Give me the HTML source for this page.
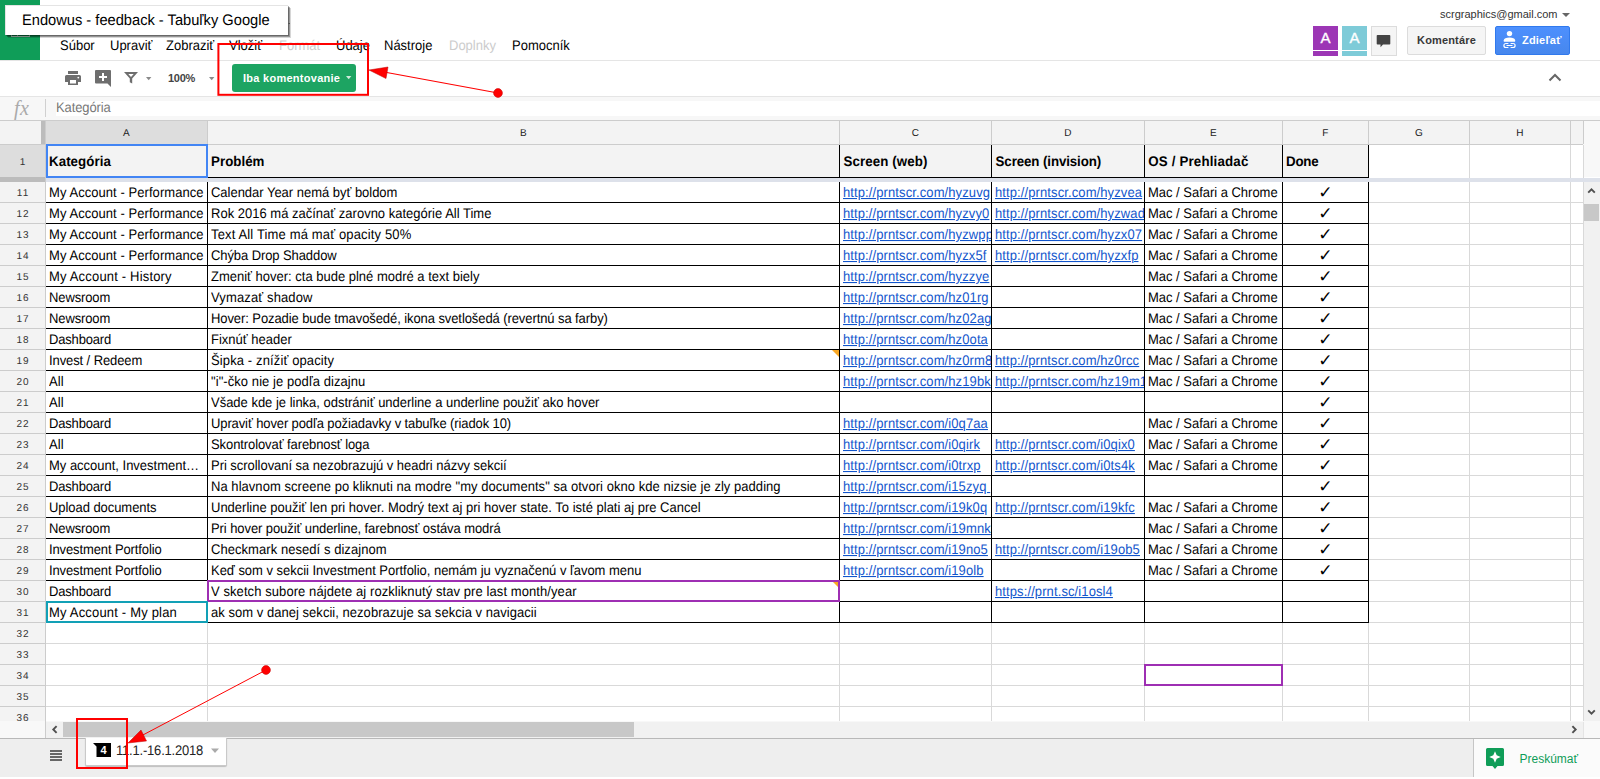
<!DOCTYPE html>
<html><head><meta charset="utf-8"><title>Endowus - feedback - Tabuľky Google</title>
<style>
html,body{margin:0;padding:0}
body{width:1600px;height:779px;overflow:hidden;position:relative;background:#fff;font-family:"Liberation Sans",Arial,sans-serif;font-size:13px;color:#000}
.abs,.abs *{box-sizing:border-box}
div,span,svg{position:absolute}
.t{white-space:nowrap;line-height:1}
.menu{top:38px;font-size:13px;line-height:15px;white-space:nowrap;color:#000;text-rendering:geometricPrecision;transform:scaleY(1.075);transform-origin:0 12px}
.menu.dis{color:#ccc}
.ch{top:121px;height:23px;background:#f3f3f3;font-size:10px;line-height:26px;overflow:hidden;text-align:center;color:#222;letter-spacing:.3px;text-rendering:geometricPrecision}
.rh{left:0;width:45px;background:#f3f3f3;font-size:10px;text-align:center;color:#333;text-rendering:geometricPrecision;letter-spacing:1.100px;text-indent:1.100px}
.rh span{position:static}
  .c{font-size:13px;text-rendering:geometricPrecision;transform:scaleY(1.075);transform-origin:0 16px;line-height:22px;height:20px;letter-spacing:.05px;white-space:pre;overflow:hidden;color:#000}
.c a,.lnk{color:#1155cc;text-decoration:underline;position:static}
.hl{height:1px;background:#000}
.vl{width:1px;background:#000}
.gh{height:1px;background:#d9d9d9}
.gv{width:1px;background:#d9d9d9}
.b{font-weight:700}
</style></head><body>

<div style="left:0;top:0;width:40px;height:60px;background:#0f9d58"></div>
<div style="left:11px;top:22px;width:19px;height:15px;border:1px solid #cfe9dc;box-sizing:border-box"></div>
<div style="left:17px;top:22px;width:1px;height:15px;background:#cfe9dc"></div>
<div class="menu" style="left:60px">Súbor</div>
<div class="menu" style="left:110px">Upraviť</div>
<div class="menu" style="left:166px">Zobraziť</div>
<div class="menu" style="left:229px">Vložiť</div>
<div class="menu dis" style="left:279px">Formát</div>
<div class="menu" style="left:336px">Údaje</div>
<div class="menu" style="left:384px">Nástroje</div>
<div class="menu dis" style="left:449px">Doplnky</div>
<div class="menu" style="left:512px">Pomocník</div>
<div style="left:5px;top:5px;width:283px;height:30px;background:#fff;border:1px solid #e4e4e4;border-right:none;border-bottom:none;box-sizing:border-box;box-shadow:1px 1px 0 rgba(0,0,0,.3),2px 2px 0 rgba(0,0,0,.3),3px 3px 0 rgba(0,0,0,.16)"></div>
<div style="left:288px;top:23px;width:2px;height:1px;background:#555"></div>
<div class="t" style="left:22px;top:13px;font-size:14.67px;line-height:17px;color:#000;text-rendering:geometricPrecision;transform:scaleY(1.04);transform-origin:0 13px">Endowus - feedback - Tabuľky Google</div>
<div class="t" style="left:1440px;top:8px;font-size:11px;line-height:13px;color:#333">scrgraphics@gmail.com</div>
<svg style="left:1561px;top:12px" width="10" height="6"><path d="M1 1h8l-4 4z" fill="#666"/></svg>
<div style="left:1313px;top:26px;width:25px;height:24px;background:#9c36b5"></div><div style="left:1313px;top:51px;width:25px;height:5px;background:#9c36b5"></div>
<div class="t" style="left:1313px;top:29px;width:25px;text-align:center;font-size:15px;line-height:18px;color:#fff;-webkit-text-stroke:.35px #fff">A</div>
<div style="left:1342px;top:26px;width:25px;height:24px;background:#7ecbd8"></div><div style="left:1342px;top:51px;width:25px;height:5px;background:#7ecbd8"></div>
<div class="t" style="left:1342px;top:29px;width:25px;text-align:center;font-size:15px;line-height:18px;color:#fff;-webkit-text-stroke:.35px #fff">A</div>
<div style="left:1371px;top:26px;width:26px;height:30px;background:#f5f5f5;border:1px solid #dcdcdc;box-sizing:border-box"></div>
<svg style="left:1376px;top:34px" width="16" height="15"><path d="M1.5 1h12a.8.8 0 0 1 .8.8v8a.8.8 0 0 1-.8.8H7l-2.5 2.6V10.600H1.500a.8.8 0 0 1-.8-.8v-8A.8.8 0 0 1 1.500 1z" fill="#444"/></svg>
<div style="left:1407px;top:26px;width:79px;height:29px;background:#f5f5f5;border:1px solid #dcdcdc;border-radius:2px;box-sizing:border-box"></div>
<div class="t b" style="left:1407px;top:34px;width:79px;text-align:center;font-size:11px;line-height:13px;color:#383838;letter-spacing:.15px">Komentáre</div>
<div style="left:1495px;top:26px;width:75px;height:29px;background:linear-gradient(#4d90fe,#4787ed);border:1px solid #3079ed;border-radius:2px;box-sizing:border-box"></div>
<svg style="left:1500px;top:28px" width="20" height="22" viewBox="0 0 20 22"><circle cx="9.500" cy="5.600" r="2.700" fill="#fff"/><path d="M3.800 13.750V12.200C3.800 10.300 6.300 9.400 9.450 9.400S15.100 10.300 15.100 12.200V13.750z" fill="#fff"/><path d="M8.400 15.500H5.900a2 2 0 0 0 0 4h2.500M10.600 15.500h2.500a2 2 0 0 1 0 4h-2.500M6.500 17.500h6" fill="none" stroke="#fff" stroke-width="1.200"/></svg>
<div class="t b" style="left:1522px;top:34px;font-size:11px;line-height:13px;color:#fff;letter-spacing:.2px">Zdieľať</div>
<div style="left:0;top:60px;width:1600px;height:1px;background:#e5e5e5"></div>
<div style="left:0;top:96px;width:1600px;height:1px;background:#e5e5e5"></div>
<svg style="left:64px;top:69px" width="18" height="18" viewBox="0 0 18 18"><path d="M4 2h10v3H4zM2.500 6h13A1.500 1.500 0 0 1 17 7.500V13h-3v3H4v-3H1V7.500A1.500 1.500 0 0 1 2.500 6zM6 11v3.500h6V11z" fill="#6e6e6e"/><circle cx="14.300" cy="8.600" r=".9" fill="#fff"/></svg>
<svg style="left:94px;top:69px" width="18" height="19" viewBox="0 0 18 19"><path d="M2 1h14a1 1 0 0 1 1 1v16l-3.500-3.500H2a1 1 0 0 1-1-1V2a1 1 0 0 1 1-1z" fill="#6e6e6e"/><path d="M8 4h2v3h3v2h-3v3H8V9H5V7h3z" fill="#fff"/></svg>
<svg style="left:123px;top:71px" width="16" height="14" viewBox="0 0 16 14"><path d="M1 1h14L9.200 7.600v4.900L6.800 11.200V7.600z" fill="#6e6e6e"/><path d="M5.300 2.900h5.400L8 5.900z" fill="#fff"/></svg>
<svg style="left:146px;top:77px" width="6" height="4"><path d="M0 0h5.400L2.700 3.200z" fill="#8a8a8a"/></svg>
<div class="t b" style="left:168px;top:72px;font-size:11px;line-height:13px;color:#444;letter-spacing:-.25px">100%</div>
<svg style="left:208.500px;top:77px" width="6" height="4"><path d="M0 0h5.400L2.700 3.200z" fill="#8a8a8a"/></svg>
<div style="left:232px;top:64px;width:124px;height:28px;background:#1da462;border-radius:3px"></div>
<div class="t b" style="left:243px;top:72px;font-size:11px;line-height:13px;color:#fff;letter-spacing:.27px">Iba komentovanie</div>
<svg style="left:346px;top:76px" width="6" height="4"><path d="M0 0h5.400L2.700 3.200z" fill="#cfeadb"/></svg>
<svg style="left:1548px;top:72px" width="14" height="10"><path d="M1.500 8.500L7 3l5.500 5.500" fill="none" stroke="#666" stroke-width="2"/></svg>
<div style="left:0;top:97px;width:1600px;height:23px;background:#f7f7f7"></div>
<div style="left:56px;top:101px;width:1544px;height:15px;background:#fff"></div>
<div style="left:45px;top:99px;width:1px;height:18px;background:#d0d0d0"></div>
<div class="t" style="left:14px;top:98px;font-family:'Liberation Serif',serif;font-style:italic;font-size:20px;line-height:20px;color:#aaa;letter-spacing:.5px">fx</div>
<div class="t" style="left:56px;top:100px;font-size:13px;line-height:15px;color:#777;letter-spacing:-.1px;text-rendering:geometricPrecision;transform:scaleY(1.075);transform-origin:0 12px">Kategória</div>
<div style="left:0;top:120px;width:1600px;height:1px;background:#ccc"></div>
<div style="left:0;top:121px;width:1583px;height:23px;background:#f3f3f3"></div>
<div style="left:1583px;top:121px;width:17px;height:56px;background:#f8f8f8"></div>
<div class="ch" style="left:46px;width:161px;background:#ddd">A</div>
<div style="left:207px;top:121px;width:1px;height:23px;background:#ccc"></div>
<div class="ch" style="left:208px;width:631px;background:#f3f3f3">B</div>
<div style="left:839px;top:121px;width:1px;height:23px;background:#ccc"></div>
<div class="ch" style="left:840px;width:151px;background:#f3f3f3">C</div>
<div style="left:991px;top:121px;width:1px;height:23px;background:#ccc"></div>
<div class="ch" style="left:992px;width:152px;background:#f3f3f3">D</div>
<div style="left:1144px;top:121px;width:1px;height:23px;background:#ccc"></div>
<div class="ch" style="left:1145px;width:137px;background:#f3f3f3">E</div>
<div style="left:1282px;top:121px;width:1px;height:23px;background:#ccc"></div>
<div class="ch" style="left:1283px;width:85px;background:#f3f3f3">F</div>
<div style="left:1368px;top:121px;width:1px;height:23px;background:#ccc"></div>
<div class="ch" style="left:1369px;width:100px;background:#f3f3f3">G</div>
<div style="left:1469px;top:121px;width:1px;height:23px;background:#ccc"></div>
<div class="ch" style="left:1470px;width:100px;background:#f3f3f3">H</div>
<div style="left:1570px;top:121px;width:1px;height:23px;background:#ccc"></div>
<div class="ch" style="left:1571px;width:12px;background:#f3f3f3"></div>
<div style="left:1583px;top:121px;width:1px;height:23px;background:#ccc"></div>
<div style="left:41px;top:121px;width:5px;height:23px;background:#bcbcbc"></div>
<div style="left:0;top:144px;width:1583px;height:1px;background:#ccc"></div>
<div class="rh" style="top:145px;height:32px;line-height:36px;background:#ddd"><span>1</span></div>
<div style="left:0;top:177px;width:45px;height:5px;background:#bcbcbc"></div>
<div class="rh" style="top:182px;height:20px;line-height:24px;overflow:hidden"><span>11</span></div>
<div style="left:0;top:202px;width:45px;height:1px;background:#ccc"></div>
<div class="rh" style="top:203px;height:20px;line-height:24px;overflow:hidden"><span>12</span></div>
<div style="left:0;top:223px;width:45px;height:1px;background:#ccc"></div>
<div class="rh" style="top:224px;height:20px;line-height:24px;overflow:hidden"><span>13</span></div>
<div style="left:0;top:244px;width:45px;height:1px;background:#ccc"></div>
<div class="rh" style="top:245px;height:20px;line-height:24px;overflow:hidden"><span>14</span></div>
<div style="left:0;top:265px;width:45px;height:1px;background:#ccc"></div>
<div class="rh" style="top:266px;height:20px;line-height:24px;overflow:hidden"><span>15</span></div>
<div style="left:0;top:286px;width:45px;height:1px;background:#ccc"></div>
<div class="rh" style="top:287px;height:20px;line-height:24px;overflow:hidden"><span>16</span></div>
<div style="left:0;top:307px;width:45px;height:1px;background:#ccc"></div>
<div class="rh" style="top:308px;height:20px;line-height:24px;overflow:hidden"><span>17</span></div>
<div style="left:0;top:328px;width:45px;height:1px;background:#ccc"></div>
<div class="rh" style="top:329px;height:20px;line-height:24px;overflow:hidden"><span>18</span></div>
<div style="left:0;top:349px;width:45px;height:1px;background:#ccc"></div>
<div class="rh" style="top:350px;height:20px;line-height:24px;overflow:hidden"><span>19</span></div>
<div style="left:0;top:370px;width:45px;height:1px;background:#ccc"></div>
<div class="rh" style="top:371px;height:20px;line-height:24px;overflow:hidden"><span>20</span></div>
<div style="left:0;top:391px;width:45px;height:1px;background:#ccc"></div>
<div class="rh" style="top:392px;height:20px;line-height:24px;overflow:hidden"><span>21</span></div>
<div style="left:0;top:412px;width:45px;height:1px;background:#ccc"></div>
<div class="rh" style="top:413px;height:20px;line-height:24px;overflow:hidden"><span>22</span></div>
<div style="left:0;top:433px;width:45px;height:1px;background:#ccc"></div>
<div class="rh" style="top:434px;height:20px;line-height:24px;overflow:hidden"><span>23</span></div>
<div style="left:0;top:454px;width:45px;height:1px;background:#ccc"></div>
<div class="rh" style="top:455px;height:20px;line-height:24px;overflow:hidden"><span>24</span></div>
<div style="left:0;top:475px;width:45px;height:1px;background:#ccc"></div>
<div class="rh" style="top:476px;height:20px;line-height:24px;overflow:hidden"><span>25</span></div>
<div style="left:0;top:496px;width:45px;height:1px;background:#ccc"></div>
<div class="rh" style="top:497px;height:20px;line-height:24px;overflow:hidden"><span>26</span></div>
<div style="left:0;top:517px;width:45px;height:1px;background:#ccc"></div>
<div class="rh" style="top:518px;height:20px;line-height:24px;overflow:hidden"><span>27</span></div>
<div style="left:0;top:538px;width:45px;height:1px;background:#ccc"></div>
<div class="rh" style="top:539px;height:20px;line-height:24px;overflow:hidden"><span>28</span></div>
<div style="left:0;top:559px;width:45px;height:1px;background:#ccc"></div>
<div class="rh" style="top:560px;height:20px;line-height:24px;overflow:hidden"><span>29</span></div>
<div style="left:0;top:580px;width:45px;height:1px;background:#ccc"></div>
<div class="rh" style="top:581px;height:20px;line-height:24px;overflow:hidden"><span>30</span></div>
<div style="left:0;top:601px;width:45px;height:1px;background:#ccc"></div>
<div class="rh" style="top:602px;height:20px;line-height:24px;overflow:hidden"><span>31</span></div>
<div style="left:0;top:622px;width:45px;height:1px;background:#ccc"></div>
<div class="rh" style="top:623px;height:20px;line-height:24px;overflow:hidden"><span>32</span></div>
<div style="left:0;top:643px;width:45px;height:1px;background:#ccc"></div>
<div class="rh" style="top:644px;height:20px;line-height:24px;overflow:hidden"><span>33</span></div>
<div style="left:0;top:664px;width:45px;height:1px;background:#ccc"></div>
<div class="rh" style="top:665px;height:20px;line-height:24px;overflow:hidden"><span>34</span></div>
<div style="left:0;top:685px;width:45px;height:1px;background:#ccc"></div>
<div class="rh" style="top:686px;height:20px;line-height:24px;overflow:hidden"><span>35</span></div>
<div style="left:0;top:706px;width:45px;height:1px;background:#ccc"></div>
<div class="rh" style="top:707px;height:20px;line-height:24px;overflow:hidden"><span>36</span></div>
<div style="left:0;top:727px;width:45px;height:1px;background:#ccc"></div>
<div style="left:45px;top:121px;width:1px;height:600px;background:#ccc"></div>
<div class="gh" style="left:46px;top:202px;width:1537px"></div>
<div class="gh" style="left:46px;top:223px;width:1537px"></div>
<div class="gh" style="left:46px;top:244px;width:1537px"></div>
<div class="gh" style="left:46px;top:265px;width:1537px"></div>
<div class="gh" style="left:46px;top:286px;width:1537px"></div>
<div class="gh" style="left:46px;top:307px;width:1537px"></div>
<div class="gh" style="left:46px;top:328px;width:1537px"></div>
<div class="gh" style="left:46px;top:349px;width:1537px"></div>
<div class="gh" style="left:46px;top:370px;width:1537px"></div>
<div class="gh" style="left:46px;top:391px;width:1537px"></div>
<div class="gh" style="left:46px;top:412px;width:1537px"></div>
<div class="gh" style="left:46px;top:433px;width:1537px"></div>
<div class="gh" style="left:46px;top:454px;width:1537px"></div>
<div class="gh" style="left:46px;top:475px;width:1537px"></div>
<div class="gh" style="left:46px;top:496px;width:1537px"></div>
<div class="gh" style="left:46px;top:517px;width:1537px"></div>
<div class="gh" style="left:46px;top:538px;width:1537px"></div>
<div class="gh" style="left:46px;top:559px;width:1537px"></div>
<div class="gh" style="left:46px;top:580px;width:1537px"></div>
<div class="gh" style="left:46px;top:601px;width:1537px"></div>
<div class="gh" style="left:46px;top:622px;width:1537px"></div>
<div class="gh" style="left:46px;top:643px;width:1537px"></div>
<div class="gh" style="left:46px;top:664px;width:1537px"></div>
<div class="gh" style="left:46px;top:685px;width:1537px"></div>
<div class="gh" style="left:46px;top:706px;width:1537px"></div>
<div class="gh" style="left:46px;top:727px;width:1537px"></div>
<div class="gv" style="left:207px;top:145px;height:576px"></div>
<div class="gv" style="left:839px;top:145px;height:576px"></div>
<div class="gv" style="left:991px;top:145px;height:576px"></div>
<div class="gv" style="left:1144px;top:145px;height:576px"></div>
<div class="gv" style="left:1282px;top:145px;height:576px"></div>
<div class="gv" style="left:1368px;top:145px;height:576px"></div>
<div class="gv" style="left:1469px;top:145px;height:576px"></div>
<div class="gv" style="left:1570px;top:145px;height:576px"></div>
<div class="gv" style="left:1583px;top:145px;height:576px"></div>
<div style="left:46px;top:145px;width:1322px;height:32px;background:#f3f3f3"></div>
<div style="left:46px;top:178px;width:1554px;height:4px;background:#dde1ea"></div>
<div class="t b" style="left:49px;top:154px;font-size:13.333px;text-rendering:geometricPrecision;transform:scaleY(1.05);transform-origin:0 13px;line-height:16px;letter-spacing:0.046px">Kategória</div>
<div class="t b" style="left:211px;top:154px;font-size:13.333px;text-rendering:geometricPrecision;transform:scaleY(1.05);transform-origin:0 13px;line-height:16px;letter-spacing:0.025px">Problém</div>
<div class="t b" style="left:843.6px;top:154px;font-size:13.333px;text-rendering:geometricPrecision;transform:scaleY(1.05);transform-origin:0 13px;line-height:16px;letter-spacing:0.078px">Screen (web)</div>
<div class="t b" style="left:995.6px;top:154px;font-size:13.333px;text-rendering:geometricPrecision;transform:scaleY(1.05);transform-origin:0 13px;line-height:16px;letter-spacing:-0.112px">Screen (invision)</div>
<div class="t b" style="left:1148.2px;top:154px;font-size:13.333px;text-rendering:geometricPrecision;transform:scaleY(1.05);transform-origin:0 13px;line-height:16px;letter-spacing:0.168px">OS / Prehliadač</div>
<div class="t b" style="left:1286px;top:154px;font-size:13.333px;text-rendering:geometricPrecision;transform:scaleY(1.05);transform-origin:0 13px;line-height:16px;letter-spacing:-0.207px">Done</div>
<div class="c " style="left:46px;top:182px;width:161px;padding-left:3px;box-sizing:border-box;letter-spacing:0.060px;">My Account - Performance</div>
<div class="c " style="left:208px;top:182px;width:631px;padding-left:3px;box-sizing:border-box;letter-spacing:-0.021px;">Calendar Year nemá byť boldom</div>
<div class="c " style="left:840px;top:182px;width:151px;padding-left:3px;box-sizing:border-box;letter-spacing:0.104px;"><span class="lnk">http://prntscr.com/hyzuvg</span></div>
<div class="c " style="left:992px;top:182px;width:152px;padding-left:3px;box-sizing:border-box;letter-spacing:0.104px;"><span class="lnk">http://prntscr.com/hyzvea</span></div>
<div class="c " style="left:1145px;top:182px;width:137px;padding-left:3px;box-sizing:border-box;letter-spacing:-0.021px;">Mac / Safari a Chrome</div>
<div class="c" style="left:1283px;top:182px;width:85px;text-align:center;font-family:'DejaVu Sans',sans-serif;font-weight:700;font-size:17px;line-height:23px;transform:none">✓</div>
<div class="c " style="left:46px;top:203px;width:161px;padding-left:3px;box-sizing:border-box;letter-spacing:0.060px;">My Account - Performance</div>
<div class="c " style="left:208px;top:203px;width:631px;padding-left:3px;box-sizing:border-box;letter-spacing:0.005px;">Rok 2016 má začínať zarovno kategórie All Time</div>
<div class="c " style="left:840px;top:203px;width:151px;padding-left:3px;box-sizing:border-box;letter-spacing:0.104px;"><span class="lnk">http://prntscr.com/hyzvy0</span></div>
<div class="c " style="left:992px;top:203px;width:152px;padding-left:3px;box-sizing:border-box;letter-spacing:0.104px;"><span class="lnk">http://prntscr.com/hyzwad</span></div>
<div class="c " style="left:1145px;top:203px;width:137px;padding-left:3px;box-sizing:border-box;letter-spacing:-0.021px;">Mac / Safari a Chrome</div>
<div class="c" style="left:1283px;top:203px;width:85px;text-align:center;font-family:'DejaVu Sans',sans-serif;font-weight:700;font-size:17px;line-height:23px;transform:none">✓</div>
<div class="c " style="left:46px;top:224px;width:161px;padding-left:3px;box-sizing:border-box;letter-spacing:0.060px;">My Account - Performance</div>
<div class="c " style="left:208px;top:224px;width:631px;padding-left:3px;box-sizing:border-box;letter-spacing:0.149px;">Text All Time má mať opacity 50%</div>
<div class="c " style="left:840px;top:224px;width:151px;padding-left:3px;box-sizing:border-box;letter-spacing:0.104px;"><span class="lnk">http://prntscr.com/hyzwpp</span></div>
<div class="c " style="left:992px;top:224px;width:152px;padding-left:3px;box-sizing:border-box;letter-spacing:0.104px;"><span class="lnk">http://prntscr.com/hyzx07</span></div>
<div class="c " style="left:1145px;top:224px;width:137px;padding-left:3px;box-sizing:border-box;letter-spacing:-0.021px;">Mac / Safari a Chrome</div>
<div class="c" style="left:1283px;top:224px;width:85px;text-align:center;font-family:'DejaVu Sans',sans-serif;font-weight:700;font-size:17px;line-height:23px;transform:none">✓</div>
<div class="c " style="left:46px;top:245px;width:161px;padding-left:3px;box-sizing:border-box;letter-spacing:0.060px;">My Account - Performance</div>
<div class="c " style="left:208px;top:245px;width:631px;padding-left:3px;box-sizing:border-box;letter-spacing:-0.089px;">Chýba Drop Shaddow</div>
<div class="c " style="left:840px;top:245px;width:151px;padding-left:3px;box-sizing:border-box;letter-spacing:0.104px;"><span class="lnk">http://prntscr.com/hyzx5f</span></div>
<div class="c " style="left:992px;top:245px;width:152px;padding-left:3px;box-sizing:border-box;letter-spacing:0.104px;"><span class="lnk">http://prntscr.com/hyzxfp</span></div>
<div class="c " style="left:1145px;top:245px;width:137px;padding-left:3px;box-sizing:border-box;letter-spacing:-0.021px;">Mac / Safari a Chrome</div>
<div class="c" style="left:1283px;top:245px;width:85px;text-align:center;font-family:'DejaVu Sans',sans-serif;font-weight:700;font-size:17px;line-height:23px;transform:none">✓</div>
<div class="c " style="left:46px;top:266px;width:161px;padding-left:3px;box-sizing:border-box;letter-spacing:0.180px;">My Account - History</div>
<div class="c " style="left:208px;top:266px;width:631px;padding-left:3px;box-sizing:border-box;letter-spacing:-0.005px;">Zmeniť hover: cta bude plné modré a text biely</div>
<div class="c " style="left:840px;top:266px;width:151px;padding-left:3px;box-sizing:border-box;letter-spacing:0.104px;"><span class="lnk">http://prntscr.com/hyzzye</span></div>
<div class="c " style="left:1145px;top:266px;width:137px;padding-left:3px;box-sizing:border-box;letter-spacing:-0.021px;">Mac / Safari a Chrome</div>
<div class="c" style="left:1283px;top:266px;width:85px;text-align:center;font-family:'DejaVu Sans',sans-serif;font-weight:700;font-size:17px;line-height:23px;transform:none">✓</div>
<div class="c " style="left:46px;top:287px;width:161px;padding-left:3px;box-sizing:border-box;letter-spacing:-0.116px;">Newsroom</div>
<div class="c " style="left:208px;top:287px;width:631px;padding-left:3px;box-sizing:border-box;letter-spacing:0.130px;">Vymazať shadow</div>
<div class="c " style="left:840px;top:287px;width:151px;padding-left:3px;box-sizing:border-box;letter-spacing:0.104px;"><span class="lnk">http://prntscr.com/hz01rg</span></div>
<div class="c " style="left:1145px;top:287px;width:137px;padding-left:3px;box-sizing:border-box;letter-spacing:-0.021px;">Mac / Safari a Chrome</div>
<div class="c" style="left:1283px;top:287px;width:85px;text-align:center;font-family:'DejaVu Sans',sans-serif;font-weight:700;font-size:17px;line-height:23px;transform:none">✓</div>
<div class="c " style="left:46px;top:308px;width:161px;padding-left:3px;box-sizing:border-box;letter-spacing:-0.116px;">Newsroom</div>
<div class="c " style="left:208px;top:308px;width:631px;padding-left:3px;box-sizing:border-box;letter-spacing:-0.085px;">Hover: Pozadie bude tmavošedé, ikona svetlošedá (revertnú sa farby)</div>
<div class="c " style="left:840px;top:308px;width:151px;padding-left:3px;box-sizing:border-box;letter-spacing:0.104px;"><span class="lnk">http://prntscr.com/hz02ag</span></div>
<div class="c " style="left:1145px;top:308px;width:137px;padding-left:3px;box-sizing:border-box;letter-spacing:-0.021px;">Mac / Safari a Chrome</div>
<div class="c" style="left:1283px;top:308px;width:85px;text-align:center;font-family:'DejaVu Sans',sans-serif;font-weight:700;font-size:17px;line-height:23px;transform:none">✓</div>
<div class="c " style="left:46px;top:329px;width:161px;padding-left:3px;box-sizing:border-box;letter-spacing:-0.179px;">Dashboard</div>
<div class="c " style="left:208px;top:329px;width:631px;padding-left:3px;box-sizing:border-box;letter-spacing:0.003px;">Fixnúť header</div>
<div class="c " style="left:840px;top:329px;width:151px;padding-left:3px;box-sizing:border-box;letter-spacing:0.104px;"><span class="lnk">http://prntscr.com/hz0ota</span></div>
<div class="c " style="left:1145px;top:329px;width:137px;padding-left:3px;box-sizing:border-box;letter-spacing:-0.021px;">Mac / Safari a Chrome</div>
<div class="c" style="left:1283px;top:329px;width:85px;text-align:center;font-family:'DejaVu Sans',sans-serif;font-weight:700;font-size:17px;line-height:23px;transform:none">✓</div>
<div class="c " style="left:46px;top:350px;width:161px;padding-left:3px;box-sizing:border-box;letter-spacing:-0.097px;">Invest / Redeem</div>
<div class="c " style="left:208px;top:350px;width:631px;padding-left:3px;box-sizing:border-box;letter-spacing:0.123px;">Šipka - znížiť opacity</div>
<div class="c " style="left:840px;top:350px;width:151px;padding-left:3px;box-sizing:border-box;letter-spacing:0.104px;"><span class="lnk">http://prntscr.com/hz0rm8</span></div>
<div class="c " style="left:992px;top:350px;width:152px;padding-left:3px;box-sizing:border-box;letter-spacing:0.104px;"><span class="lnk">http://prntscr.com/hz0rcc</span></div>
<div class="c " style="left:1145px;top:350px;width:137px;padding-left:3px;box-sizing:border-box;letter-spacing:-0.021px;">Mac / Safari a Chrome</div>
<div class="c" style="left:1283px;top:350px;width:85px;text-align:center;font-family:'DejaVu Sans',sans-serif;font-weight:700;font-size:17px;line-height:23px;transform:none">✓</div>
<div class="c " style="left:46px;top:371px;width:161px;padding-left:3px;box-sizing:border-box;letter-spacing:0.116px;">All</div>
<div class="c " style="left:208px;top:371px;width:631px;padding-left:3px;box-sizing:border-box;letter-spacing:0.068px;">"i"-čko nie je podľa dizajnu</div>
<div class="c " style="left:840px;top:371px;width:151px;padding-left:3px;box-sizing:border-box;letter-spacing:0.104px;"><span class="lnk">http://prntscr.com/hz19bk</span></div>
<div class="c " style="left:992px;top:371px;width:152px;padding-left:3px;box-sizing:border-box;letter-spacing:0.104px;"><span class="lnk">http://prntscr.com/hz19m1</span></div>
<div class="c " style="left:1145px;top:371px;width:137px;padding-left:3px;box-sizing:border-box;letter-spacing:-0.021px;">Mac / Safari a Chrome</div>
<div class="c" style="left:1283px;top:371px;width:85px;text-align:center;font-family:'DejaVu Sans',sans-serif;font-weight:700;font-size:17px;line-height:23px;transform:none">✓</div>
<div class="c " style="left:46px;top:392px;width:161px;padding-left:3px;box-sizing:border-box;letter-spacing:0.116px;">All</div>
<div class="c " style="left:208px;top:392px;width:631px;padding-left:3px;box-sizing:border-box;letter-spacing:-0.011px;">Všade kde je linka, odstrániť underline a underline použiť ako hover</div>
<div class="c" style="left:1283px;top:392px;width:85px;text-align:center;font-family:'DejaVu Sans',sans-serif;font-weight:700;font-size:17px;line-height:23px;transform:none">✓</div>
<div class="c " style="left:46px;top:413px;width:161px;padding-left:3px;box-sizing:border-box;letter-spacing:-0.179px;">Dashboard</div>
<div class="c " style="left:208px;top:413px;width:631px;padding-left:3px;box-sizing:border-box;letter-spacing:-0.112px;">Upraviť hover podľa požiadavky v tabuľke (riadok 10)</div>
<div class="c " style="left:840px;top:413px;width:151px;padding-left:3px;box-sizing:border-box;letter-spacing:0.104px;"><span class="lnk">http://prntscr.com/i0q7aa</span></div>
<div class="c " style="left:1145px;top:413px;width:137px;padding-left:3px;box-sizing:border-box;letter-spacing:-0.021px;">Mac / Safari a Chrome</div>
<div class="c" style="left:1283px;top:413px;width:85px;text-align:center;font-family:'DejaVu Sans',sans-serif;font-weight:700;font-size:17px;line-height:23px;transform:none">✓</div>
<div class="c " style="left:46px;top:434px;width:161px;padding-left:3px;box-sizing:border-box;letter-spacing:0.116px;">All</div>
<div class="c " style="left:208px;top:434px;width:631px;padding-left:3px;box-sizing:border-box;letter-spacing:-0.089px;">Skontrolovať farebnosť loga</div>
<div class="c " style="left:840px;top:434px;width:151px;padding-left:3px;box-sizing:border-box;letter-spacing:0.104px;"><span class="lnk">http://prntscr.com/i0qirk</span></div>
<div class="c " style="left:992px;top:434px;width:152px;padding-left:3px;box-sizing:border-box;letter-spacing:0.104px;"><span class="lnk">http://prntscr.com/i0qix0</span></div>
<div class="c " style="left:1145px;top:434px;width:137px;padding-left:3px;box-sizing:border-box;letter-spacing:-0.021px;">Mac / Safari a Chrome</div>
<div class="c" style="left:1283px;top:434px;width:85px;text-align:center;font-family:'DejaVu Sans',sans-serif;font-weight:700;font-size:17px;line-height:23px;transform:none">✓</div>
<div class="c " style="left:46px;top:455px;width:161px;padding-left:3px;box-sizing:border-box;letter-spacing:-0.012px;">My account, Investment…</div>
<div class="c " style="left:208px;top:455px;width:631px;padding-left:3px;box-sizing:border-box;letter-spacing:-0.040px;">Pri scrollovaní sa nezobrazujú v headri názvy sekcií</div>
<div class="c " style="left:840px;top:455px;width:151px;padding-left:3px;box-sizing:border-box;letter-spacing:0.104px;"><span class="lnk">http://prntscr.com/i0trxp</span></div>
<div class="c " style="left:992px;top:455px;width:152px;padding-left:3px;box-sizing:border-box;letter-spacing:0.104px;"><span class="lnk">http://prntscr.com/i0ts4k</span></div>
<div class="c " style="left:1145px;top:455px;width:137px;padding-left:3px;box-sizing:border-box;letter-spacing:-0.021px;">Mac / Safari a Chrome</div>
<div class="c" style="left:1283px;top:455px;width:85px;text-align:center;font-family:'DejaVu Sans',sans-serif;font-weight:700;font-size:17px;line-height:23px;transform:none">✓</div>
<div class="c " style="left:46px;top:476px;width:161px;padding-left:3px;box-sizing:border-box;letter-spacing:-0.179px;">Dashboard</div>
<div class="c " style="left:208px;top:476px;width:631px;padding-left:3px;box-sizing:border-box;letter-spacing:0.042px;">Na hlavnom screene po kliknuti na modre "my documents" sa otvori okno kde nizsie je zly padding</div>
<div class="c " style="left:840px;top:476px;width:151px;padding-left:3px;box-sizing:border-box;letter-spacing:0.104px;"><span class="lnk">http://prntscr.com/i15zyq </span></div>
<div class="c" style="left:1283px;top:476px;width:85px;text-align:center;font-family:'DejaVu Sans',sans-serif;font-weight:700;font-size:17px;line-height:23px;transform:none">✓</div>
<div class="c " style="left:46px;top:497px;width:161px;padding-left:3px;box-sizing:border-box;letter-spacing:-0.057px;">Upload documents</div>
<div class="c " style="left:208px;top:497px;width:631px;padding-left:3px;box-sizing:border-box;letter-spacing:0.001px;">Underline použiť len pri hover. Modrý text aj pri hover state. To isté plati aj pre Cancel</div>
<div class="c " style="left:840px;top:497px;width:151px;padding-left:3px;box-sizing:border-box;letter-spacing:0.104px;"><span class="lnk">http://prntscr.com/i19k0q</span></div>
<div class="c " style="left:992px;top:497px;width:152px;padding-left:3px;box-sizing:border-box;letter-spacing:0.104px;"><span class="lnk">http://prntscr.com/i19kfc</span></div>
<div class="c " style="left:1145px;top:497px;width:137px;padding-left:3px;box-sizing:border-box;letter-spacing:-0.021px;">Mac / Safari a Chrome</div>
<div class="c" style="left:1283px;top:497px;width:85px;text-align:center;font-family:'DejaVu Sans',sans-serif;font-weight:700;font-size:17px;line-height:23px;transform:none">✓</div>
<div class="c " style="left:46px;top:518px;width:161px;padding-left:3px;box-sizing:border-box;letter-spacing:-0.116px;">Newsroom</div>
<div class="c " style="left:208px;top:518px;width:631px;padding-left:3px;box-sizing:border-box;letter-spacing:-0.083px;">Pri hover použiť underline, farebnosť ostáva modrá</div>
<div class="c " style="left:840px;top:518px;width:151px;padding-left:3px;box-sizing:border-box;letter-spacing:0.104px;"><span class="lnk">http://prntscr.com/i19mnk</span></div>
<div class="c " style="left:1145px;top:518px;width:137px;padding-left:3px;box-sizing:border-box;letter-spacing:-0.021px;">Mac / Safari a Chrome</div>
<div class="c" style="left:1283px;top:518px;width:85px;text-align:center;font-family:'DejaVu Sans',sans-serif;font-weight:700;font-size:17px;line-height:23px;transform:none">✓</div>
<div class="c " style="left:46px;top:539px;width:161px;padding-left:3px;box-sizing:border-box;letter-spacing:-0.115px;">Investment Portfolio</div>
<div class="c " style="left:208px;top:539px;width:631px;padding-left:3px;box-sizing:border-box;letter-spacing:0.054px;">Checkmark nesedí s dizajnom</div>
<div class="c " style="left:840px;top:539px;width:151px;padding-left:3px;box-sizing:border-box;letter-spacing:0.104px;"><span class="lnk">http://prntscr.com/i19no5</span></div>
<div class="c " style="left:992px;top:539px;width:152px;padding-left:3px;box-sizing:border-box;letter-spacing:0.104px;"><span class="lnk">http://prntscr.com/i19ob5</span></div>
<div class="c " style="left:1145px;top:539px;width:137px;padding-left:3px;box-sizing:border-box;letter-spacing:-0.021px;">Mac / Safari a Chrome</div>
<div class="c" style="left:1283px;top:539px;width:85px;text-align:center;font-family:'DejaVu Sans',sans-serif;font-weight:700;font-size:17px;line-height:23px;transform:none">✓</div>
<div class="c " style="left:46px;top:560px;width:161px;padding-left:3px;box-sizing:border-box;letter-spacing:-0.115px;">Investment Portfolio</div>
<div class="c " style="left:208px;top:560px;width:631px;padding-left:3px;box-sizing:border-box;letter-spacing:-0.027px;">Keď som v sekcii Investment Portfolio, nemám ju vyznačenú v ľavom menu</div>
<div class="c " style="left:840px;top:560px;width:151px;padding-left:3px;box-sizing:border-box;letter-spacing:0.104px;"><span class="lnk">http://prntscr.com/i19olb</span></div>
<div class="c " style="left:1145px;top:560px;width:137px;padding-left:3px;box-sizing:border-box;letter-spacing:-0.021px;">Mac / Safari a Chrome</div>
<div class="c" style="left:1283px;top:560px;width:85px;text-align:center;font-family:'DejaVu Sans',sans-serif;font-weight:700;font-size:17px;line-height:23px;transform:none">✓</div>
<div class="c " style="left:46px;top:581px;width:161px;padding-left:3px;box-sizing:border-box;letter-spacing:-0.179px;">Dashboard</div>
<div class="c " style="left:208px;top:581px;width:631px;padding-left:3px;box-sizing:border-box;letter-spacing:0.080px;">V sketch subore nájdete aj rozkliknutý stav pre last month/year</div>
<div class="c " style="left:992px;top:581px;width:152px;padding-left:3px;box-sizing:border-box;letter-spacing:0.104px;"><span class="lnk">https://prnt.sc/i1osl4</span></div>
<div class="c " style="left:46px;top:602px;width:161px;padding-left:3px;box-sizing:border-box;letter-spacing:0.186px;">My Account - My plan</div>
<div class="c " style="left:208px;top:602px;width:631px;padding-left:3px;box-sizing:border-box;letter-spacing:0.034px;">ak som v danej sekcii, nezobrazuje sa sekcia v navigacii</div>
<div class="hl" style="left:207px;top:177px;width:1162px"></div>
<div class="hl" style="left:46px;top:202px;width:1323px"></div>
<div class="hl" style="left:46px;top:223px;width:1323px"></div>
<div class="hl" style="left:46px;top:244px;width:1323px"></div>
<div class="hl" style="left:46px;top:265px;width:1323px"></div>
<div class="hl" style="left:46px;top:286px;width:1323px"></div>
<div class="hl" style="left:46px;top:307px;width:1323px"></div>
<div class="hl" style="left:46px;top:328px;width:1323px"></div>
<div class="hl" style="left:46px;top:349px;width:1323px"></div>
<div class="hl" style="left:46px;top:370px;width:1323px"></div>
<div class="hl" style="left:46px;top:391px;width:1323px"></div>
<div class="hl" style="left:46px;top:412px;width:1323px"></div>
<div class="hl" style="left:46px;top:433px;width:1323px"></div>
<div class="hl" style="left:46px;top:454px;width:1323px"></div>
<div class="hl" style="left:46px;top:475px;width:1323px"></div>
<div class="hl" style="left:46px;top:496px;width:1323px"></div>
<div class="hl" style="left:46px;top:517px;width:1323px"></div>
<div class="hl" style="left:46px;top:538px;width:1323px"></div>
<div class="hl" style="left:46px;top:559px;width:1323px"></div>
<div class="hl" style="left:46px;top:580px;width:1323px"></div>
<div class="hl" style="left:46px;top:601px;width:1323px"></div>
<div class="hl" style="left:46px;top:622px;width:1323px"></div>
<div class="vl" style="left:207px;top:145px;height:33px"></div>
<div class="vl" style="left:207px;top:182px;height:441px"></div>
<div class="vl" style="left:839px;top:145px;height:33px"></div>
<div class="vl" style="left:839px;top:182px;height:441px"></div>
<div class="vl" style="left:991px;top:145px;height:33px"></div>
<div class="vl" style="left:991px;top:182px;height:441px"></div>
<div class="vl" style="left:1144px;top:145px;height:33px"></div>
<div class="vl" style="left:1144px;top:182px;height:441px"></div>
<div class="vl" style="left:1282px;top:145px;height:33px"></div>
<div class="vl" style="left:1282px;top:182px;height:441px"></div>
<div class="vl" style="left:1368px;top:145px;height:33px"></div>
<div class="vl" style="left:1368px;top:182px;height:441px"></div>
<svg style="left:832px;top:350px" width="7" height="7"><path d="M0 0h7v7z" fill="#f9a825"/></svg>
<svg style="left:832px;top:581px" width="7" height="7"><path d="M0 0h7v7z" fill="#f9a825"/></svg>
<div style="left:46px;top:144px;width:162px;height:34px;border:2px solid #4285f4;box-sizing:border-box"></div>
<div style="left:207px;top:580px;width:633px;height:22px;border:2px solid #9e2fb3;box-sizing:border-box"></div>
<div style="left:46px;top:601px;width:162px;height:22px;border:2px solid #12a0b6;box-sizing:border-box"></div>
<div style="left:1144px;top:664px;width:139px;height:22px;border:2px solid #9e2fb3;box-sizing:border-box"></div>
<div style="left:1584px;top:182px;width:16px;height:539px;background:#f1f1f1"></div>
<div style="left:1584px;top:204px;width:15px;height:17px;background:#c8c8c8"></div>
<svg style="left:1587px;top:187px" width="9" height="7"><path d="M1.200 5.600L4.500 2.300l3.300 3.300" fill="none" stroke="#505050" stroke-width="1.900"/></svg>
<svg style="left:1587px;top:709px" width="9" height="7"><path d="M1.200 1.400L4.500 4.700l3.300-3.300" fill="none" stroke="#505050" stroke-width="1.900"/></svg>
<div style="left:0;top:721px;width:1600px;height:17px;background:#f8f8f8"></div>
<div style="left:46px;top:722px;width:1537px;height:16px;background:#f1f1f1"></div>
<div style="left:63px;top:722px;width:571px;height:15px;background:#c8c8c8"></div>
<svg style="left:51px;top:725px" width="7" height="9"><path d="M5.600 1.200L2.300 4.500l3.300 3.300" fill="none" stroke="#505050" stroke-width="1.900"/></svg>
<svg style="left:1571px;top:725px" width="7" height="9"><path d="M1.400 1.200L4.700 4.500l-3.300 3.300" fill="none" stroke="#505050" stroke-width="1.900"/></svg>
<div style="left:45px;top:721px;width:1px;height:17px;background:#ccc"></div>
<div style="left:1583px;top:722px;width:1px;height:16px;background:#e4e4e4"></div>
<div style="left:0;top:739px;width:1600px;height:38px;background:#eee"></div>
<div style="left:0;top:738px;width:1600px;height:1px;background:#b8b8b8"></div>
<div style="left:50px;top:750px;width:12px;height:2px;background:#666"></div>
<div style="left:50px;top:753px;width:12px;height:2px;background:#666"></div>
<div style="left:50px;top:756px;width:12px;height:2px;background:#666"></div>
<div style="left:50px;top:759px;width:12px;height:2px;background:#666"></div>
<div style="left:85px;top:738px;width:142px;height:28px;background:#fff;border:1px solid #c9c9c9;border-top:none;border-radius:0 0 2px 2px;box-sizing:border-box;box-shadow:0 1px 1px rgba(0,0,0,.2)"></div>
<svg style="left:93px;top:743px" width="18" height="14"><path d="M0 0h18v14H3.500V3.500z" fill="#000"/></svg>
<div class="t b" style="left:96px;top:744px;width:15px;text-align:center;font-size:11px;line-height:12px;color:#fff">4</div>
<div class="t" style="left:116px;top:743px;font-size:13px;line-height:15px;color:#222;letter-spacing:-.2px;text-rendering:geometricPrecision;transform:scaleY(1.075);transform-origin:0 12px">11.1.-16.1.2018</div>
<svg style="left:210px;top:748px" width="10" height="6"><path d="M1 .5h8L5 5z" fill="#aaa"/></svg>
<div style="left:1473px;top:739px;width:127px;height:38px;background:#fbfbfb"></div>
<div style="left:1473px;top:739px;width:1px;height:38px;background:#c6c6c6"></div>
<svg style="left:1486px;top:748px" width="18" height="22" viewBox="0 0 18 22"><path d="M1.500 0h15a1.500 1.500 0 0 1 1.500 1.500v15a1.500 1.500 0 0 1-1.500 1.500H11.500L9 21l-2.500-3H1.500A1.500 1.500 0 0 1 0 16.500v-15A1.500 1.500 0 0 1 1.500 0z" fill="#0f9d58"/><path d="M9 3.300l1.700 4 4 1.700-4 1.700-1.700 4-1.700-4-4-1.700 4-1.700z" fill="#fff"/></svg>
<div class="t" style="left:1519.500px;top:752px;font-size:12px;line-height:15px;color:#0f9d58">Preskúmať</div>
<svg style="left:0;top:0" width="1600" height="779">
<rect x="218.400" y="44" width="149.600" height="50.800" fill="none" stroke="#f00" stroke-width="2"/>
<line x1="498" y1="93" x2="384" y2="72" stroke="#f00" stroke-width="1.100"/>
<path d="M369 70L388 67L386 78.500z" fill="#f00" stroke="#b00" stroke-width=".5"/>
<circle cx="498" cy="93" r="4.400" fill="#f00" stroke="#c00" stroke-width=".6"/>
<rect x="77" y="719" width="50" height="49" fill="none" stroke="#f00" stroke-width="2"/>
<line x1="266" y1="670" x2="141" y2="736" stroke="#f00" stroke-width="1"/>
<path d="M128 743L141 730L146.500 741z" fill="#f00" stroke="#b00" stroke-width=".5"/>
<circle cx="266" cy="670" r="4.400" fill="#f00" stroke="#c00" stroke-width=".6"/>
</svg>
</body></html>
